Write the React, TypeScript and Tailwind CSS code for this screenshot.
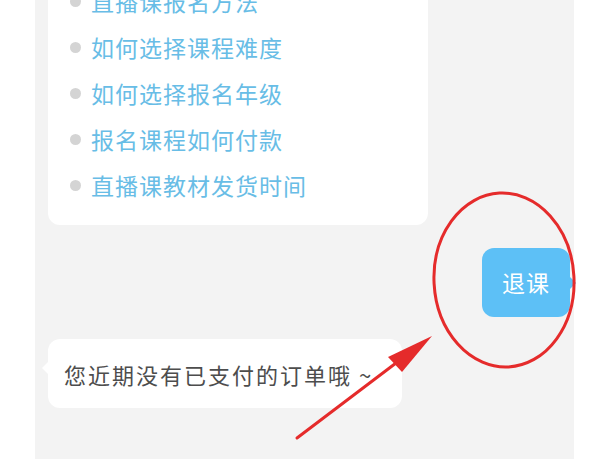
import React from "react";

const items = [
  "直播课报名方法",
  "如何选择课程难度",
  "如何选择报名年级",
  "报名课程如何付款",
  "直播课教材发货时间",
];

export default function App() {
  return (
    <div
      className="relative w-[610px] h-[459px] overflow-hidden bg-white flex"
      style={{ fontFamily: '"Noto Sans CJK SC", "Noto Sans", sans-serif' }}
    >
      <div className="ml-[35px] w-[539px] h-full bg-[#f3f3f3] flex flex-col pl-[13px]">
        <div className="-mt-[22px] w-[380px] bg-white rounded-[12px] pb-[17px] pl-[22px]">
          {items.map((t) => (
            <div key={t} className="h-[46px] flex items-center">
              <span className="w-[11px] h-[11px] rounded-full bg-[#d4d4d4] shrink-0" />
              <span className="ml-[10px] text-[23px] tracking-[1px] text-[#68bde6] leading-none">
                {t}
              </span>
            </div>
          ))}
        </div>

        <div className="mt-[23px] flex justify-end pr-[4px]">
          <div className="relative w-[88px] h-[69px] rounded-[12px] bg-[#5dc0f6] flex items-center justify-center">
            <span className="text-[23px] tracking-[1px] text-white leading-none">退课</span>
            <span className="absolute right-[-6px] top-[29px] w-0 h-0 border-y-[6px] border-y-transparent border-l-[6px] border-l-[#5dc0f6]" />
          </div>
        </div>

        <div className="mt-[22px] flex">
          <div className="relative w-[354px] h-[69px] rounded-[12px] bg-white flex items-center pl-[16px]">
            <span className="absolute left-[-6px] top-[23px] w-0 h-0 border-y-[6px] border-y-transparent border-r-[6px] border-r-white" />
            <span className="text-[22px] tracking-[2px] text-[#4d4d4d] leading-none">
              您近期没有已支付的订单哦 ~
            </span>
          </div>
        </div>
      </div>

      <svg className="absolute left-0 top-0 pointer-events-none" width="610" height="459" viewBox="0 0 610 459">
        <ellipse cx="504" cy="280" rx="70" ry="87" fill="none" stroke="#e52b2b" strokeWidth="3" transform="rotate(-3 504 280)" />
        <line x1="297" y1="438" x2="400" y2="360" stroke="#e52b2b" strokeWidth="3" strokeLinecap="round" />
        <polygon points="432,336 388,357 402,372" fill="#e52b2b" />
      </svg>
    </div>
  );
}
